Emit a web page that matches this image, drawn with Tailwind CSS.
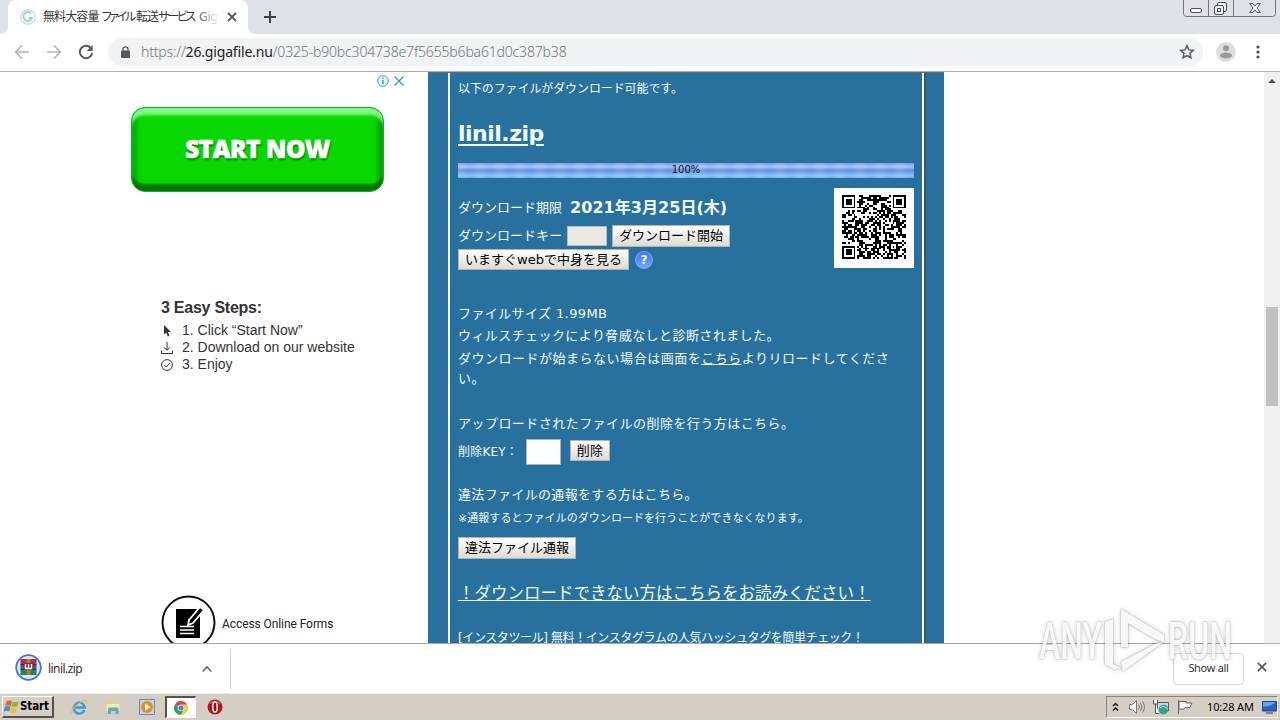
<!DOCTYPE html>
<html lang="ja">
<head>
  <meta charset="UTF-8">
  <meta name="viewport" content="width=device-width, initial-scale=1">
  <title>無料大容量 ファイル転送サービス GigaFile</title>
  <script src="https://cdn.jsdelivr.net/npm/@tailwindcss/browser@4"></script>
</head>
<body class="w-[1280px] h-[720px] overflow-hidden flex flex-col bg-white font-['Noto_Sans','Noto_Sans_CJK_JP',sans-serif] relative">

  <!-- Tab strip -->
  <header class="h-[34px] shrink-0 bg-[#dee1e8] flex justify-between">
    <div class="flex">
      <div class="w-2 bg-white"><div class="h-full bg-[#dee1e8] rounded-br-lg"></div></div>
      <div class="w-[240px] h-full bg-white rounded-t-lg flex items-center pl-3 pr-2.5">
        <svg class="w-4 h-4 shrink-0" viewBox="0 0 16 16" fill="none">
          <circle cx="8" cy="8" r="7.2" stroke="#b5dcd9" stroke-width="1.2"/>
          <path d="M11.2 4.6A4.4 4.4 0 1 0 12 9H8.5" stroke="#a3cfcc" stroke-width="2"/>
        </svg>
        <div class="relative ml-[7px] w-[176px] overflow-hidden whitespace-nowrap text-[12px] leading-5 text-[#333]"><span class="tracking-[-0.9px]">無料大容量</span> <span class="tracking-[-2.3px] [font-feature-settings:'palt']">ファイル</span><span class="tracking-[-0.9px] ml-[2px]">転送</span><span class="tracking-[-2.3px] [font-feature-settings:'palt']">サービス</span><span class="ml-[5px] tracking-[-0.2px]">GigaF</span>
          <div class="absolute right-0 top-0 w-6 h-full bg-linear-to-r from-white/0 to-white"></div>
        </div>
        <svg class="w-2.5 h-2.5 ml-2 shrink-0" viewBox="0 0 10 10" stroke="#55585c" stroke-width="1.8"><path d="M1 1l8 8M9 1L1 9"/></svg>
      </div>
      <div class="w-2 bg-white"><div class="h-full bg-[#dee1e8] rounded-bl-lg"></div></div>
      <svg class="w-3.5 h-3.5 mt-2.5 ml-[7px]" viewBox="0 0 14 14" stroke="#3c4043" stroke-width="2"><path d="M7 1v12M1 7h12"/></svg>
    </div>
    <svg class="w-[94px] h-[18px] mr-[3px]" viewBox="0 0 94 18" fill="none" stroke="#70757c">
      <path d="M.5 0v13.5a3 3 0 0 0 3 3h86a3 3 0 0 0 3-3V0M25.5 0v16M50.5 0v16"/>
      <g stroke="#4a4f58">
        <rect x="7.5" y="8.500" width="11" height="4" rx="1.500" fill="#f5f6f8"/>
        <rect x="34.500" y="2.500" width="9" height="9" rx="1.500" fill="#f5f6f8"/>
        <rect x="31.500" y="5.500" width="9" height="9" rx="1.500" fill="#f5f6f8"/>
        <rect x="34.500" y="8.500" width="3" height="3"/>
        <path d="M66.500 3.500h3.500l2 2.500 2-2.500h3.500l-3.500 4.500 3.500 4.500h-3.500l-2-2.500-2 2.500h-3.500l3.500-4.500z" fill="#f5f6f8" stroke-width=".9"/>
      </g>
    </svg>
  </header>

  <!-- Toolbar -->
  <div class="h-[38px] shrink-0 border-b border-[#b1b1b1] flex items-center bg-white pb-px">
    <svg class="w-4 h-4 ml-3.5" viewBox="0 0 16 16" fill="none" stroke="#b4b6b9" stroke-width="1.700"><path d="M15 8H2M8 1.500L1.500 8 8 14.500"/></svg>
    <svg class="w-4 h-4 ml-4" viewBox="0 0 16 16" fill="none" stroke="#b4b6b9" stroke-width="1.700"><path d="M1 8h13M8 1.500L14.500 8 8 14.500"/></svg>
    <svg class="w-4 h-4 ml-4" viewBox="0 0 16 16" fill="none" stroke="#55585c" stroke-width="2"><path d="M13.200 4.500A6.200 6.200 0 1 0 14.200 9"/><path d="M14.700 1v6h-6z" fill="#55585c" stroke="none"/></svg>
    <div class="ml-3.5 w-[1095px] h-7 rounded-full bg-[#f1f3f4] flex items-center pl-[13px] pr-2">
      <svg class="w-[9px] h-3" viewBox="0 0 9 12"><rect y="4.500" width="9" height="7.500" rx="1" fill="#55585c"/><path d="M2 5V3.300a2.500 2.500 0 0 1 5 0V5" fill="none" stroke="#55585c" stroke-width="1.300"/></svg>
      <div class="ml-[11px] grow text-[14px] leading-5 tracking-[-0.170px] text-[#70757a] whitespace-nowrap font-light font-['Noto_Sans',sans-serif]">https://<span class="text-[#202124] font-normal">26.gigafile.nu</span>/0325-b90bc304738e7f5655b6ba61d0c387b38</div>
      <svg class="w-4 h-4" viewBox="0 0 16 16" fill="none" stroke="#55585c" stroke-width="1.500"><path d="M8 1.800l1.850 4.100 4.450.45-3.350 3 .95 4.400L8 11.500l-3.900 2.250.95-4.400-3.350-3 4.450-.45z"/></svg>
    </div>
    <svg class="w-5 h-5 ml-[13px]" viewBox="0 0 20 20"><circle cx="10" cy="10" r="10" fill="#dedede"/><circle cx="10" cy="6.300" r="3" fill="#9b9b9b"/><ellipse cx="10" cy="13.500" rx="6" ry="3" fill="#9b9b9b"/></svg>
    <svg class="w-1 h-4 ml-[20px]" viewBox="0 0 4 16" fill="#4a4d51"><circle cx="2" cy="3" r="1.600"/><circle cx="2" cy="8" r="1.600"/><circle cx="2" cy="13" r="1.600"/></svg>
  </div>

  <!-- Page -->
  <main class="h-[571px] shrink-0 flex overflow-hidden">

    <!-- Ad column -->
    <aside class="w-[428px] shrink-0 flex flex-col font-['Liberation_Sans',sans-serif] text-[#333]">
      <div class="h-[35px] shrink-0 pt-[3px] pr-[23px] flex justify-end gap-1 items-start">
        <svg class="w-3 h-3" viewBox="0 0 12 12" fill="none" stroke="#2ba3c4"><circle cx="6" cy="6" r="5.300"/><path d="M6 5v4.200M6 2.600v1.400" stroke-width="1.500"/></svg>
        <svg class="w-3 h-3" viewBox="0 0 12 12" stroke="#2ba3c4" stroke-width="1.400"><path d="M1.500 1.500l9 9M10.500 1.500l-9 9"/></svg>
      </div>
      <div class="ml-[131px] w-[253px] h-[85px] shrink-0 rounded-[14px] bg-[#08d800] border border-[#12a93b] shadow-[inset_0_8px_3px_-1px_#82f982,inset_0_-8px_2px_-1px_#007800,inset_6px_0_4px_-1px_#04ab04,inset_-6px_0_4px_-1px_#04a004] flex items-center justify-center">
        <span class="text-white font-black text-[24.500px] tracking-[-0.500px] leading-none font-['Open_Sans',sans-serif] [-webkit-text-stroke:0.600px_white] [text-shadow:1px_2px_2px_#08701a]">START NOW</span>
      </div>
      <div class="ml-[161px] mt-[106px] shrink-0">
        <h3 class="font-bold text-[16px] leading-5 tracking-[-0.250px]">3 Easy Steps:</h3>
        <ol class="mt-[4px] text-[14px] leading-[17px] whitespace-nowrap">
          <li class="flex items-center gap-[9px]"><svg class="w-3 h-3" viewBox="0 0 12 12"><path d="M3 0v9.500l2.200-2 1.600 4 1.700-.7-1.600-3.800H10z" fill="#333"/></svg>1. Click “Start Now”</li>
          <li class="flex items-center gap-[9px]"><svg class="w-3 h-3" viewBox="0 0 12 12" fill="none" stroke="#333"><path d="M6 0v8M3 5.300l3 3 3-3M.5 8.500v3h11v-3"/></svg>2. Download on our website</li>
          <li class="flex items-center gap-[9px]"><svg class="w-3 h-3" viewBox="0 0 12 12" fill="none" stroke="#333"><circle cx="6" cy="6" r="5.400"/><path d="M3.300 6l2 2 3.500-3.700"/></svg>3. Enjoy</li>
        </ol>
      </div>
      <div class="ml-[161px] mt-[222px] shrink-0 flex items-center gap-1.5">
        <svg class="w-[55px] h-[55px]" viewBox="0 0 55 55">
          <circle cx="27.500" cy="27.500" r="26" fill="#fff" stroke="#111" stroke-width="2"/>
          <path d="M15 14h24v29H15z" fill="#000"/>
          <path d="M28 25l11-13 4 3-11 13-5 2z" fill="#000" stroke="#fff" stroke-width="1.800"/>
          <path d="M19 31.500h14M19 35h14M19 38.500h14" stroke="#fff" stroke-width="1.500"/>
        </svg>
        <span class="pt-0.5 text-[12px] tracking-[-0.080px] font-['Roboto',sans-serif] text-[#222]">Access Online Forms</span>
      </div>
    </aside>

    <!-- Download panel -->
    <section class="w-[516px] shrink-0 bg-[#28719f] border-t border-[#4a6e83] px-5">
      <div class="h-[580px] border-x-2 border-white shadow-[2px_0_0_#3f5566] px-2 pt-1.5 text-[#f2fcff] text-[13px] leading-5 whitespace-nowrap font-['DejaVu_Sans','Noto_Sans_CJK_JP',sans-serif]">
        <p class="text-[12px] tracking-[-0.100px]">以下のファイルがダウンロード可能です。</p>
        <h1 class="mt-[15px] h-10 leading-10 text-[22px] tracking-[-0.500px] font-bold"><a class="underline underline-offset-[3px] decoration-2">linil.zip</a></h1>
        <div class="mt-[9px] h-[15px] bg-[repeating-linear-gradient(90deg,#ffffff1c_0_4px,#ffffff00_10px_14px,#ffffff1c_20px),linear-gradient(180deg,#6f9bea_0%,#a9c3f5_25%,#618de0_48%,#6aa8f0_65%,#85c5fb_85%,#6fb0ea_100%)] text-center text-[10px] leading-[14px] text-[#111]">100%</div>
        <div class="flex justify-between">
          <div>
            <p class="mt-5 h-5 flex items-center gap-2">ダウンロード期限<b class="text-[16px] tracking-[0.050px]">2021年3月25日(木)</b></p>
            <div class="mt-[7px] flex items-center gap-[5px]">ダウンロードキー<input class="w-10 h-5 bg-[#ebe9e4] border border-[#b9bcbf]"><button class="w-[118px] h-[22px] leading-5 bg-linear-to-b from-white to-[#dedbd3] border border-[#b5b3ac] text-black">ダウンロード開始</button></div>
            <div class="mt-[2px] flex items-center gap-1.5">
              <button class="w-[171px] h-[21px] leading-[18px] bg-linear-to-b from-white to-[#dedbd3] border border-[#b5b3ac] text-black">いますぐwebで中身を見る</button>
              <span class="w-[18px] h-[18px] rounded-full bg-linear-to-b from-[#3f75ee] to-[#74a8ff] border border-[#78a7f6] text-white font-bold text-[12px] leading-4 text-center">?</span>
            </div>
          </div>
          <svg id="qr" class="w-20 h-20 mt-2.5 bg-white" viewBox="-4 -3.500 41 41" shape-rendering="crispEdges"></svg>
        </div>
        <p class="mt-[34px] tracking-[0.400px]">ファイルサイズ 1.99MB</p>
        <p class="mt-[2px] tracking-[0.420px]">ウィルスチェックにより脅威なしと診断されました。</p>
        <p class="mt-[3px] tracking-[0.510px]">ダウンロードが始まらない場合は画面を<a class="underline">こちら</a>よりリロードしてくださ<br>い。</p>
        <p class="mt-[25px] tracking-[0.460px]">アップロードされたファイルの削除を行う方はこちら。</p>
        <div class="mt-[5px] h-[26px] flex items-center text-[12px] tracking-[0.200px]"><span class="w-16">削除KEY：</span><input class="ml-1 w-[35px] h-[26px] bg-white border border-[#a9b3ba]"><button class="ml-[9px] mb-[3px] w-10 h-[21px] leading-[19px] text-[13px] bg-linear-to-b from-white to-[#dedbd3] border border-[#b5b3ac] text-black">削除</button></div>
        <p class="mt-5 tracking-[0.330px]">違法ファイルの通報をする方はこちら。</p>
        <p class="mt-1 text-[11px] tracking-[0.050px]">※通報するとファイルのダウンロードを行うことができなくなります。</p>
        <button class="block mt-2 w-[118px] h-[22px] leading-5 bg-linear-to-b from-white to-[#dedbd3] border border-[#b5b3ac] text-black">違法ファイル通報</button>
        <p class="mt-6 h-[22px] leading-[22px] text-[16.500px] underline">！ダウンロードできない方はこちらをお読みください！</p>
        <p class="mt-[23px] text-[12px] tracking-[-0.400px]">[インスタツール] 無料！インスタグラムの人気ハッシュタグを簡単チェック！</p>
      </div>
    </section>

    <!-- Scrollbar -->
    <div class="ml-auto w-4 bg-[#f1f1f1] flex flex-col items-center">
      <div class="mt-[7px] border-x-4 border-x-transparent border-b-4 border-b-[#505050]"></div>
      <div class="mt-[224px] w-3 h-[99px] bg-[#c1c1c1]"></div>
    </div>
  </main>

  <!-- Download shelf -->
  <div class="h-[50px] shrink-0 border-t border-[#a9a9a9] bg-white flex items-center">
    <div class="w-[231px] h-10 flex items-center pl-[15px] pr-[18px] border-r border-[#cfcfcf]">
      <svg class="w-[27px] h-[27px] mb-0.5" viewBox="0 0 27 27">
        <circle cx="13.500" cy="13.500" r="12.300" fill="#dbe7fb" stroke="#3f75d8" stroke-width="1.800"/>
        <path d="M5.500 5h16v5.500h-16z" fill="#c22a3c"/><path d="M5.500 10.500h16v5h-16z" fill="#3456b8"/><path d="M5.500 15.500h16V21h-16z" fill="#278443"/>
        <path d="M5.500 10.500h16M5.500 15.500h16" stroke="#222" stroke-width=".8"/>
        <path d="M11.500 5h4v16h-4z" fill="#a67c39"/><path d="M9 9h9v7H9z" fill="#84273b"/><path d="M10.500 10v4.500h6V10M13.500 10v4" fill="none" stroke="#fff" stroke-width="1.400"/>
      </svg>
      <span class="ml-[6px] text-[12px] tracking-[-0.550px] text-[#333]">linil.zip</span>
      <svg class="ml-auto w-2.5 h-2" viewBox="0 0 10 8" fill="none" stroke="#66696d" stroke-width="1.600"><path d="M.7 6.500L5 2l4.300 4.500"/></svg>
    </div>
    <div class="ml-auto w-[71px] h-8 rounded border border-[#d5d7da] text-center text-[11px] leading-[27px] tracking-[-0.300px] text-[#333]">Show all</div>
    <svg class="w-2.5 h-2.5 ml-[13px] mr-[13px] mb-1" viewBox="0 0 10 10" stroke="#55585c" stroke-width="1.700"><path d="M.8.8l8.400 8.400M9.200.8L.8 9.200"/></svg>
  </div>

  <!-- Taskbar -->
  <footer class="h-[27px] shrink-0 bg-[#d5cec5] border-t border-[#f3f1ec] flex items-center">
    <div class="ml-[2px] w-[52px] h-[22px] border-t border-l border-white border-r-2 border-b-2 border-r-[#55524d] border-b-[#55524d] flex items-center font-bold text-[11.500px] text-black font-['DejaVu_Sans_Condensed','DejaVu_Sans',sans-serif] tracking-[-0.100px]">
      <svg class="w-[17px] h-4 shrink-0" viewBox="0 0 17 16"><path d="M3.500 2.500q3-2 5.500-.3L7.800 7Q5 5.500 2 7z" fill="#e8612b"/><path d="M9.800 2.500q3 1.500 6-.2L14.400 7q-3 1.700-5.800.3z" fill="#86b83b"/><path d="M1.800 8q3-1.700 5.700-.2L6.300 12.500Q3.500 11 .5 12.700z" fill="#4c87d6"/><path d="M8.400 8.200q3 1.500 5.900 0L13 13q-3 1.700-5.800.2z" fill="#f3bd2c"/></svg>
      Start
    </div>
    <svg class="w-4 h-4 ml-[17px]" viewBox="0 0 16 16" fill="none"><path d="M13.500 11A5.500 5.500 0 1 1 13.800 8.500H4" stroke="#3b9bdf" stroke-width="2.400"/><path d="M1 14.500C-1 11 9 2 14.500 1.500q1.500.5 0 3" stroke="#e9bd45" stroke-width="1.200"/></svg>
    <svg class="w-4 h-4 ml-[18px]" viewBox="0 0 16 16"><path d="M1 2h5l1 2h7v10H1z" fill="#e9cf75"/><path d="M1.500 5h13v7h-13z" fill="#f7e9a8"/><path d="M3 15V10q0-1.500 1.500-1.500h7.500q1.500 0 1.500 1.500v5h-3v-3H6v3z" fill="#59a9dc"/></svg>
    <svg class="w-4 h-4 ml-[18px]" viewBox="0 0 16 16"><path d="M.5.500h15v15H.5z" fill="#bcd4ee" stroke="#5d8fc6"/><circle cx="8" cy="8" r="6" fill="#f08a18"/><path d="M6 4.500L11.500 8 6 11.500z" fill="#fff"/></svg>
    <div class="ml-[10px] w-[31px] h-[22px] bg-white border-t-2 border-l-2 border-[#55524d] border-b border-r border-b-white border-r-white flex items-center justify-center">
      <svg class="w-3.5 h-3.5" viewBox="0 0 14 14"><path d="M7 7L.9 3.500a7 7 0 0 1 12.200 0z" fill="#dd4b3e"/><path d="M7 7L.9 3.500A7 7 0 0 0 7 14l3-5.200z" fill="#2fa158"/><path d="M7 7V3.500h6.100A7 7 0 0 1 7 14l3-5.200z" fill="#f7cd3b"/><circle cx="7" cy="7" r="3.300" fill="#fff"/><circle cx="7" cy="7" r="2.600" fill="#4a84e8"/></svg>
    </div>
    <svg class="w-4 h-4 ml-[11px]" viewBox="0 0 16 16"><circle cx="8" cy="8" r="7.500" fill="#b81519"/><path d="M2 5a7 6 0 0 1 12 0q-6-2-12 0z" fill="#df6460"/><ellipse cx="8" cy="8" rx="2.200" ry="5" fill="#8a0b10" stroke="#fff" stroke-width="1.500"/></svg>

    <div class="ml-auto mr-[2px] w-[172px] h-[22px] border border-[#8b857c] border-b-white border-r-white flex items-center text-[11px] text-black">
      <svg class="w-[7px] h-2.5 ml-[5px]" viewBox="0 0 7 10" fill="none" stroke="#111" stroke-width="1.400"><path d="M1 4l2.500-2.500L6 4M1 8.500L3.500 6 6 8.500"/></svg>
      <svg class="w-4 h-4 ml-2.5" viewBox="0 0 16 16" fill="none" stroke="#77777a"><path d="M.5 5.500h3l4-4v13l-4-4h-3z" fill="#fff"/><path d="M9.500 5.500q2 2.500 0 5M11.500 4q3 4 0 8M13.500 2.500q4 5.500 0 11"/></svg>
      <svg class="w-4 h-4 ml-2" viewBox="0 0 16 16"><path d="M4.500 3.500h11v8.500h-11z" fill="#b9d9e8" stroke="#555d66"/><path d="M.5 1v4h4V1M2.500 5v9.500h4" fill="#fff" stroke="#555"/><circle cx="10.500" cy="10.500" r="4.800" fill="#35a18c"/><path d="M7 9q3-3 5-1t3 2" stroke="#c3efd9" fill="none"/></svg>
      <svg class="w-4 h-4 ml-2" viewBox="0 0 16 16" fill="#fff" stroke="#66666a"><path d="M1.500 1v14"/><path d="M2 2.500h7v1.500h6l-2 4.500H8L7 10H2z"/></svg>
      <span class="ml-[14px] whitespace-nowrap tracking-[-0.150px]">10:28 AM</span>
      <svg class="w-[15px] h-[13px] ml-2 shrink-0" viewBox="0 0 15 13"><path d="M.5.500h14v9.500H.5z" fill="#2462c4" stroke="#234884"/><path d="M1 1h13Q10 5 1 6z" fill="#6aa0ec"/><path d="M4 12h7" stroke="#333"/></svg>
    </div>
  </footer>

  <!-- Watermark over the page corner -->
  <svg class="absolute left-[1030px] top-[600px] w-[210px] h-20 pointer-events-none drop-shadow-[0_0_2px_#00000048]" viewBox="0 0 210 80" font-family="Roboto, sans-serif" font-size="51" font-weight="500">
    <g fill="#fff" fill-opacity=".85" stroke="#000" stroke-opacity=".08" stroke-width="2" stroke-linejoin="round" paint-order="stroke">
      <text x="9" y="59" textLength="63" lengthAdjust="spacingAndGlyphs">ANY</text>
      <text x="138" y="59" textLength="64" lengthAdjust="spacingAndGlyphs">RUN</text>
      <path d="M75 22l8-3v45l8 4-6 2-10-6zM91 9l43 26v7l-9-3L98 23v24h-7zM91 62l34-18 9-2L93 71z"/>
    </g>
  </svg>

  <script>
    // 33x33 code: finder squares in three corners, one alignment square, noise between
    const size = 33;
    let seed = 325;
    const noise = () => (seed = (seed * 1103515245 + 12345) % 2147483648) / 2147483648 > 0.46;
    const ring = (x, y, cx, cy) => Math.max(Math.abs(x - cx), Math.abs(y - cy));
    let d = '';
    for (let y = 0; y < size; y++) {
      for (let x = 0; x < size; x++) {
        let on = noise();
        for (const [cx, cy] of [[3, 3], [29, 3], [3, 29]]) {
          const r = ring(x, y, cx, cy);
          if (r <= 4) on = r !== 2 && r !== 4;
        }
        const a = ring(x, y, 26, 26);
        if (a <= 2) on = a !== 1;
        if (on) d += `M${x} ${y}h1v1h-1z`;
      }
    }
    document.getElementById('qr').innerHTML = `<path d="${d}"/>`;
  </script>
</body>
</html>
